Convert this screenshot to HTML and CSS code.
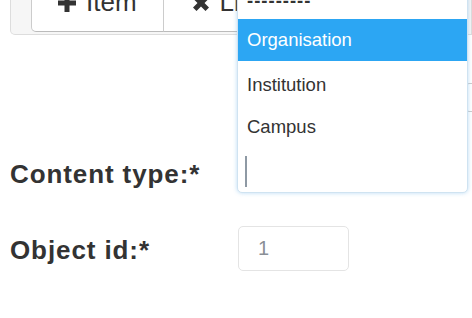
FILE: index.html
```html
<!DOCTYPE html>
<html lang="en">
<head>
  <meta charset="UTF-8">
  <title>Edit item</title>
  <link rel="stylesheet" href="styles.css">
</head>
<body>

  <div class="toolbar">
    <div class="btn-group">
      <button class="btn">
        <svg class="icon" viewBox="0 0 18 18"><rect x="6.5" y="0" width="5" height="18"/><rect x="0" y="6.5" width="18" height="5"/></svg>
        Item
      </button>
      <button class="btn">
        <svg class="icon" viewBox="0 0 18 18"><path d="M1 4.5 L4.5 1 L9 5.5 L13.5 1 L17 4.5 L12.5 9 L17 13.5 L13.5 17 L9 12.5 L4.5 17 L1 13.5 L5.5 9 Z"/></svg>
        Link
      </button>
    </div>
  </div>

  <form class="form">
    <div class="extra-row">
      <span class="extra-box"></span>
    </div>

    <div class="row">
      <label class="label">Content type:*</label>
      <div class="field">
        <div class="select-box"></div>
        <!-- open dropdown of the select -->
        <div class="dropdown">
          <div class="option first">---------</div>
          <div class="option active">Organisation</div>
          <div class="option">Institution</div>
          <div class="option">Campus</div>
          <div class="search"><span class="caret"></span></div>
        </div>
      </div>
    </div>

    <div class="row">
      <label class="label label-low">Object id:*</label>
      <div class="field">
        <input class="input" type="text" value="1">
      </div>
    </div>
  </form>

</body>
</html>
```

FILE: styles.css
```css
body {
  font-family: "Liberation Sans", Arial, sans-serif;
  color: #333;
  background: #fff;
  margin: 0;
  padding: 0;
  overflow: hidden;
}
/* Toolbar */
.toolbar {
  margin: -31px 0 0 10px;
  padding: 0 0 2px 20px;
  background: #f6f6f6;
  border: 1px solid #ddd;
  border-top: none;
  border-radius: 0 0 0 5px;
}
.btn-group {
  display: flex;
}
.btn {
  display: flex;
  align-items: center;
  gap: 10px;
  height: 63px;
  padding: 5px 26px 0;
  background: #fff;
  border: 1px solid #ccc;
  border-bottom-color: #bbb;
  border-top: none;
  font-family: inherit;
  font-size: 26px;
  color: #333;
  margin-left: -1px;
}
.btn:first-child {
  margin-left: 0;
  border-radius: 0 0 0 5px;
}
.btn + .btn {
  padding-left: 28px;
}
.icon {
  width: 18px;
  height: 18px;
  fill: #333;
}
/* Form */
.form {
  padding-left: 10px;
}
.extra-row {
  margin-top: 48px;
  height: 29px;
}
.extra-box {
  display: block;
  margin-left: 456px;
  width: 20px;
  height: 27px;
  border: 1px solid #ccc;
  border-radius: 3px;
}
.row {
  display: flex;
  align-items: center;
  height: 45px;
  margin-top: 40px;
}
.row + .row {
  margin-top: 29px;
}
.label {
  width: 228px;
  font-size: 26px;
  font-weight: bold;
  letter-spacing: 0.9px;
  color: #333;
}
.label-low {
  padding-top: 4px;
}
.field {
  position: relative;
  height: 45px;
}
.select-box {
  width: 230px;
  height: 45px;
}
.dropdown {
  position: absolute;
  left: -1px;
  bottom: 4px;
  width: 229px;
  background: #fff;
  border: 1px solid #cfe3f1;
  border-radius: 0 0 5px 5px;
  box-shadow: 0 0 4px rgba(102, 175, 233, 0.45);
}
.option {
  height: 42px;
  line-height: 42px;
  padding-left: 9px;
  font-size: 18.5px;
  color: #333;
}
.option.first {
  line-height: 47px;
  letter-spacing: 1px;
  font-weight: bold;
}
.option.active {
  background: #2ca6f3;
  color: #fff;
}
.option.active + .option {
  margin-top: 3px;
}
.search {
  height: 44px;
  padding: 8px 0 0 7px;
  box-sizing: border-box;
}
.caret {
  display: block;
  width: 2px;
  height: 31px;
  background: #8e99a4;
}
.input {
  width: 111px;
  height: 45px;
  box-sizing: border-box;
  padding: 0 19px;
  border: 1px solid #e4e4e4;
  border-radius: 5px;
  font-family: inherit;
  font-size: 20px;
  color: #8a8f96;
}
```
